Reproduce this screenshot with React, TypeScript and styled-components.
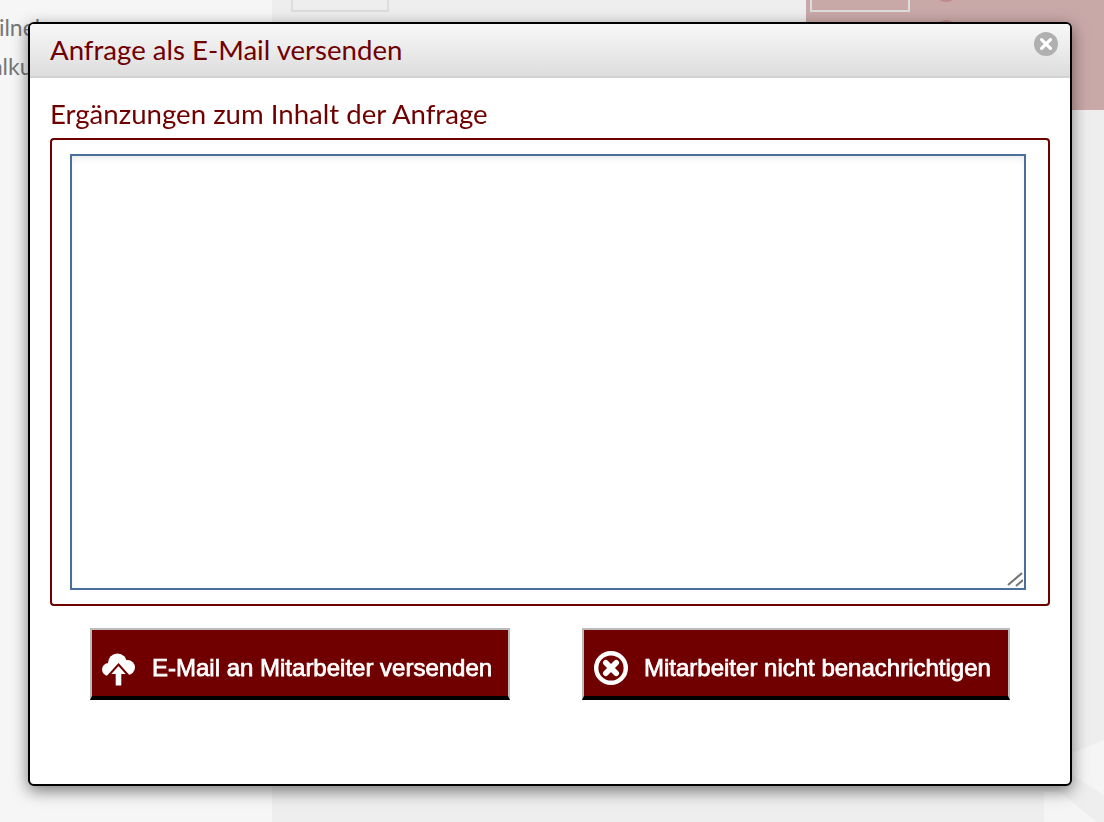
import styled, {createGlobalStyle} from 'styled-components';

const GlobalStyle = createGlobalStyle`
    html, body {
        margin: 0;
        padding: 0;
        height: 100%;
        overflow: hidden;
        background: #eeeeee;
    }
`;

const CloudIcon = () => (
    <IconSvg width="36" height="38" viewBox="0 0 36 38">
        <circle cx="7.5" cy="20.5" r="6.5" fill="#fff"/>
        <circle cx="16.5" cy="14" r="9.5" fill="#fff"/>
        <circle cx="26.5" cy="18.5" r="7.5" fill="#fff"/>
        <rect x="7.5" y="18" width="19" height="9" fill="#fff"/>
        <path d="M17.5 15.5 L27 26 L21.3 26 L21.3 37.5 L13.7 37.5 L13.7 26 L8 26 Z" fill="#fff" stroke="#700000" strokeWidth="2"/>
    </IconSvg>
);

const CircleXIcon = () => (
    <IconSvg width="36" height="36" viewBox="0 0 36 36">
        <circle cx="18" cy="18" r="14.8" fill="none" stroke="#fff" strokeWidth="4.4"/>
        <path d="M12.8 12.8 L23.2 23.2 M23.2 12.8 L12.8 23.2" stroke="#fff" strokeWidth="5.6" strokeLinecap="round"/>
    </IconSvg>
);

const App = () => {
    return <AppRoot>
        <GlobalStyle/>

        <Sidebar>
            <SideLink>Teilnehmer</SideLink>
            <SideLink>Kalkulation</SideLink>
        </Sidebar>

        <Main>
            <TopBar>
                <GhostBox/>
                <PinkPanel>
                    <PinkBox/>
                    <PinkDots>
                        <PinkDot/>
                        <PinkDot/>
                    </PinkDots>
                </PinkPanel>
            </TopBar>
            <Rays viewBox="0 0 104 102">
                <polygon points="73,33 104,20 104,75 72,55" fill="#f5f5f5"/>
                <polygon points="44,72 60,72 97,102 44,102" fill="#f5f5f5"/>
            </Rays>
        </Main>

        <Modal>
            <ModalHeader>
                <ModalTitle>Anfrage als E-Mail versenden</ModalTitle>
                <CloseButton aria-label="Schließen">
                    <svg width="24" height="24" viewBox="0 0 24 24">
                        <circle cx="12" cy="12" r="12" fill="#b0b0b0"/>
                        <path d="M7.6 7.6 L16.4 16.4 M16.4 7.6 L7.6 16.4" stroke="#fff" strokeWidth="3.2" strokeLinecap="round"/>
                    </svg>
                </CloseButton>
            </ModalHeader>

            <ModalBody>
                <SectionTitle>Ergänzungen zum Inhalt der Anfrage</SectionTitle>
                <FieldBox>
                    <NoteInput/>
                    <ResizeGrip width="16" height="16" viewBox="0 0 16 16">
                        <path d="M1 14 L15 2 M9 15 L16 9" stroke="#777" strokeWidth="2.2"/>
                    </ResizeGrip>
                </FieldBox>

                <ButtonRow>
                    <ActionButton $width={420}>
                        <CloudIcon/>
                        <span>E-Mail an Mitarbeiter versenden</span>
                    </ActionButton>
                    <ActionButton $width={428}>
                        <CircleXIcon/>
                        <span>Mitarbeiter nicht benachrichtigen</span>
                    </ActionButton>
                </ButtonRow>
            </ModalBody>
        </Modal>
    </AppRoot>;
};

export default App;


const AppRoot = styled.div`
    display: flex;
    width: 1104px;
    height: 822px;
    overflow: hidden;
    font-family: "Lato", "Liberation Sans", sans-serif;
`;

const Sidebar = styled.div`
    width: 272px;
    flex-shrink: 0;
    padding-top: 8px;
    background: #f6f6f6;
    box-sizing: border-box;
`;

const SideLink = styled.div`
    margin-left: -24px;
    height: 39px;
    line-height: 39px;
    font-size: 23px;
    color: #777777;
`;

const Main = styled.div`
    position: relative;
    flex: 1;
    background: #eeeeee;
`;

const TopBar = styled.div`
    display: flex;
    justify-content: space-between;
    align-items: flex-start;
    padding-left: 19px;
`;

const GhostBox = styled.div`
    width: 98px;
    height: 12px;
    border: 2px solid #dddddd;
    border-top: 0;
    box-sizing: border-box;
`;

const PinkPanel = styled.div`
    display: flex;
    width: 298px;
    height: 110px;
    padding-left: 4px;
    background: #c9a8a8;
    box-sizing: border-box;
    overflow: hidden;
`;

const PinkBox = styled.div`
    width: 100px;
    height: 12px;
    border: 2px solid #dddddd;
    border-top: 0;
    box-sizing: border-box;
`;

const PinkDots = styled.div`
    display: flex;
    flex-direction: column;
    gap: 18px;
    margin: -22px 0 0 24px;
`;

const PinkDot = styled.div`
    width: 24px;
    height: 24px;
    border-radius: 50%;
    background: #c08a8d;
`;

const Rays = styled.svg`
    position: absolute;
    right: 0;
    bottom: 0;
    width: 104px;
    height: 102px;
`;

const Modal = styled.div`
    position: fixed;
    top: 22px;
    left: 28px;
    width: 1044px;
    height: 764px;
    display: flex;
    flex-direction: column;
    border: 2px solid #000000;
    border-radius: 6px;
    background: #ffffff;
    box-sizing: border-box;
    box-shadow: 0 5px 16px rgba(0, 0, 0, 0.5);
    overflow: hidden;
`;

const ModalHeader = styled.div`
    position: relative;
    height: 54px;
    flex-shrink: 0;
    padding: 0 0 2px 20px;
    display: flex;
    align-items: center;
    background: linear-gradient(to bottom, #f8f8f8, #dddddd);
    border-bottom: 2px solid #d2d2d2;
    box-sizing: border-box;
`;

const ModalTitle = styled.div`
    font-size: 27.6px;
    color: #700000;
`;

const CloseButton = styled.div`
    position: absolute;
    top: 8px;
    right: 12px;
    width: 24px;
    height: 24px;
`;

const ModalBody = styled.div`
    display: flex;
    flex-direction: column;
    padding: 20px 20px 0;
`;

const SectionTitle = styled.div`
    height: 40px;
    line-height: 32px;
    font-size: 27.6px;
    color: #700000;
`;

const FieldBox = styled.div`
    position: relative;
    height: 468px;
    padding: 14px 22px 14px 18px;
    border: 2px solid #700000;
    border-radius: 4px;
    box-sizing: border-box;
`;

const NoteInput = styled.textarea`
    display: block;
    width: 100%;
    height: 100%;
    margin: 0;
    padding: 4px;
    border: 2px solid #4a6f9c;
    border-radius: 0;
    outline: none;
    resize: none;
    background: #ffffff;
    box-sizing: border-box;
    box-shadow: inset 0 4px 8px -4px rgba(0, 0, 0, 0.15);
`;

const ResizeGrip = styled.svg`
    position: absolute;
    right: 25px;
    bottom: 17px;
    pointer-events: none;
`;

const ButtonRow = styled.div`
    display: flex;
    gap: 72px;
    margin-top: 22px;
    padding-left: 40px;
`;

const ActionButton = styled.button<{$width: number}>`
    display: flex;
    align-items: center;
    width: ${({$width}) => $width}px;
    height: 72px;
    padding: 10px 0 0 9px;
    gap: 15px;
    border: 2px solid #bbbbbb;
    border-bottom: 4px solid #000000;
    border-radius: 0;
    background: #700000;
    box-sizing: border-box;
    font-family: "Liberation Sans", Arial, sans-serif;
    font-size: 24px;
    font-weight: 400;
    -webkit-text-stroke: 0.75px #ffffff;
    color: #ffffff;
`;

const IconSvg = styled.svg`
    flex-shrink: 0;
`;
